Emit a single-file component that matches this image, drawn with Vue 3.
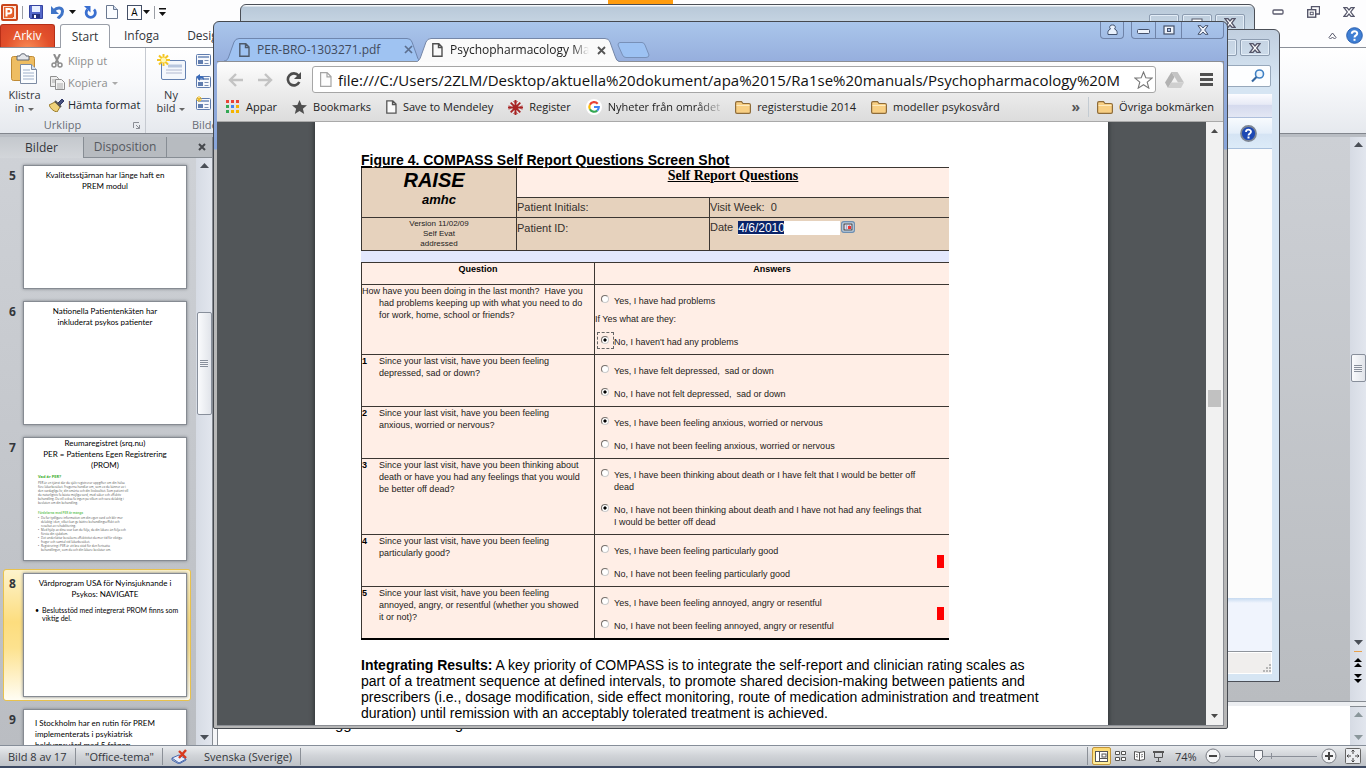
<script setup>
const slides = [
  { n: 5, lines: ['Kvalitetsstjärnan har länge haft en', 'PREM modul'] },
  { n: 6, lines: ['Nationella Patientenkäten har', 'inkluderat psykos patienter'] },
  { n: 7, lines: ['Reumaregistret (srq.nu)', 'PER = Patientens Egen Registrering', '(PROM)'], dense: true },
  { n: 8, lines: ['Vårdprogram USA för Nyinsjuknande i', 'Psykos: NAVIGATE'], bullet: ['Beslutsstöd med integrerat PROM finns som', 'viktig del.'], selected: true },
  { n: 9, lines: ['I Stockholm har en rutin för PREM', 'implementerats i psykiatrisk', 'heldygnsvård med 5 frågor:'], left: true },
]

const bookmarks = [
  { label: 'Appar', icon: 'apps' },
  { label: 'Bookmarks', icon: 'star' },
  { label: 'Save to Mendeley', icon: 'page' },
  { label: 'Register', icon: 'flake' },
  { label: 'Nyheter från området', icon: 'google', fade: true },
  { label: 'registerstudie 2014', icon: 'folder' },
  { label: 'modeller psykosvård', icon: 'folder' },
]

const appColors = ['#ea4335', '#ea4335', '#ea4335', '#34a853', '#4285f4', '#f4b400', '#34a853', '#f4b400', '#f4b400']

const questions = [
  { n: 1, q: ['Since your last visit, have you been feeling', 'depressed, sad or down?'], a: [['Yes, I have felt depressed,\u00a0 sad or down'], ['No, I have not felt depressed,\u00a0 sad or down']], pick: 1 },
  { n: 2, q: ['Since your last visit, have you been feeling', 'anxious, worried or nervous?'], a: [['Yes, I have been feeling anxious, worried or nervous'], ['No, I have not been feeling anxious, worried or nervous']], pick: 0 },
  { n: 3, q: ['Since your last visit, have you been thinking about', 'death or have you had any feelings that you would', 'be better off dead?'], a: [['Yes, I have been thinking about death or I have felt that I would be better off', 'dead'], ['No, I have not been thinking about death and I have not had any feelings that', 'I would be better off dead']], pick: 1 },
  { n: 4, q: ['Since your last visit, have you been feeling', 'particularly good?'], a: [['Yes, I have been feeling particularly good'], ['No, I have not been feeling particularly good']], pick: -1, flag: true },
  { n: 5, q: ['Since your last visit, have you been feeling', 'annoyed, angry, or resentful (whether you showed', 'it or not)?'], a: [['Yes, I have been feeling annoyed, angry or resentful'], ['No, I have not been feeling annoyed, angry or resentful']], pick: -1, flag: true },
]
</script>

<template>
  <div class="desktop">
    <section class="ppt" aria-label="PowerPoint">
      <header class="qat">
        <div class="qat-left">
          <svg width="17" height="17" viewBox="0 0 17 17"><rect x="1" y="1" width="15" height="15" rx="1" fill="#fbe3d8" stroke="#c9451b" stroke-width="2" /><rect x="3" y="3" width="9" height="11" fill="#e8622c" /><path d="M5.500 12.500V5h2.500a2 2 0 0 1 0 4.500H6" fill="none" stroke="#fff" stroke-width="2" /><path d="M12.500 4v9" stroke="#d9531f" /></svg>
          <i class="vsep"></i>
          <svg class="i-save" width="14" height="14" viewBox="0 0 14 14"><path d="M.5.5h13v13h-12l-1-1z" fill="#5468c9" stroke="#3443a0" /><rect x="3" y="1" width="8" height="6" fill="#e8efff" /><rect x="3" y="9" width="8" height="4" fill="#23307c" /><rect x="5" y="10" width="2" height="3" fill="#fff" /></svg>
          <svg class="i-undo" width="14" height="14" viewBox="0 0 14 14"><path d="M3 5.500C6 2 11.500 2 11.500 6.500S8.500 11 7 13.500" fill="none" stroke="#3f74c8" stroke-width="3" /><path d="M0 1v8h8z" fill="#3f74c8" /></svg>
          <svg class="i-dd" width="7" height="4"><path d="M0 0h7L3.500 4z" fill="#111" /></svg>
          <svg class="i-redo" width="13" height="13" viewBox="0 0 13 13"><path d="M3.500 3.500A4.600 4.600 0 1 0 10 3.500" fill="none" stroke="#3a6fd0" stroke-width="2.800" /><path d="M0 0h6.500v6.500L4 4z" fill="#3a6fd0" /></svg>
          <svg class="i-new" width="12" height="14" viewBox="0 0 12 14"><path d="M.5.500h7l4 4v9H.5z" fill="#fafcff" stroke="#6a7890" /><path d="M7.500.5v4h4" fill="#cfdcf0" stroke="#6a7890" /></svg>
          <span class="abox">A</span>
          <svg width="7" height="4"><path d="M0 0h7L3.500 4z" fill="#111" /></svg>
          <i class="vsep"></i>
          <svg width="7" height="8"><path d="M0 0h7v1.500H0zM0 4h7L3.500 8z" fill="#111" /></svg>
        </div>
        <div class="qat-right">
          <svg width="12" height="6"><rect x="1" y="1" width="10" height="4" rx="1" fill="#fff" stroke="#5b5b6e" stroke-width="1.300" /></svg>
          <svg width="13" height="12" viewBox="0 0 13 12"><path d="M4.500 3V.7h8V8H9" fill="none" stroke="#55566a" stroke-width="1.300" /><rect x=".7" y="3.700" width="8" height="7.500" fill="#fff" stroke="#55566a" stroke-width="1.400" /><rect x="3.200" y="6.200" width="3" height="2.500" fill="#fff" stroke="#55566a" /></svg>
          <svg width="12" height="10" viewBox="0 0 12 10"><path d="M1 .7h3L6 3 8 .7h3L7.700 5 11 9.300H8L6 7 4 9.300H1L4.300 5z" fill="#fff" stroke="#55566a" stroke-width="1.200" /></svg>
        </div>
      </header>

      <nav class="rtabs">
        <button class="rtab file">Arkiv</button>
        <button class="rtab active">Start</button>
        <button class="rtab">Infoga</button>
        <button class="rtab">Design</button>
        <div class="rhelp">
          <svg width="9" height="8" viewBox="0 0 9 8"><path d="M1 5.500l3.500-4.500L8 5.500 6.500 7l-2-2-2 2z" fill="#fff" stroke="#55566a" /></svg>
          <svg width="17" height="17" viewBox="0 0 17 17"><circle cx="8.500" cy="8.500" r="7.800" fill="#3f7fd4" stroke="#2a5faf" /><path d="M5.800 6.800C5.800 3.500 11.200 3.500 11.200 6.500 11.200 8.500 8.500 8.300 8.500 10.500" fill="none" stroke="#fff" stroke-width="2" /><rect x="7.500" y="11.800" width="2" height="2" fill="#fff" /></svg>
        </div>
      </nav>

      <div class="ribbon">
        <div class="group clip">
          <div class="group-body">
            <button class="big">
              <svg width="27" height="31" viewBox="0 0 27 31"><rect x=".5" y="3.500" width="23" height="24" rx="2" fill="#eebd62" stroke="#c08b35" /><path d="M6 3h3c0-3 6-3 6 0h3v4H6z" fill="#e4e6ea" stroke="#5f6672" /><path d="M9.500 11.500h11l5 5v14h-16z" fill="#fbfdff" stroke="#7c8ba3" /><path d="M20.500 11.500v5h5" fill="#d5e0f0" stroke="#7c8ba3" /><path d="M12 17h7M12 20h11M12 23h11M12 26h11" stroke="#9fb0ca" /></svg>
              <span>Klistra</span><span>in <b class="dd"></b></span>
            </button>
            <div class="small-btns">
              <button class="sm off"><svg width="16" height="14" viewBox="0 0 16 14"><path d="M5 0l4.500 9M11 0L6.500 9" stroke="#8d8d8d" stroke-width="2" /><circle cx="5" cy="11" r="2" fill="none" stroke="#8d8d8d" stroke-width="1.500" /><circle cx="11" cy="11" r="2" fill="none" stroke="#8d8d8d" stroke-width="1.500" /></svg>Klipp ut</button>
              <button class="sm off"><svg width="16" height="14" viewBox="0 0 16 14"><path d="M1.500.5h6l2 2v8h-8z" fill="#eee" stroke="#8f8f8f" /><path d="M6.500 3.500h6l3 3v7h-9z" fill="#f4f4f4" stroke="#8f8f8f" /><path d="M3 4h3M3 6h3M8 8h6M8 10h6M8 12h6" stroke="#aaa" /></svg>Kopiera <b class="dd"></b></button>
              <button class="sm"><svg width="16" height="14" viewBox="0 0 16 14"><path d="M9 5l4-4 2 2-4 4z" fill="#46507e" stroke="#2f3766" /><path d="M0 7l6-3 5 5-3 5C4 13 2 11 0 7z" fill="#efd27a" stroke="#9c7d2c" /><path d="M6 3l6 6" stroke="#555" stroke-width="2" /></svg>Hämta format</button>
            </div>
          </div>
          <div class="group-name"><span>Urklipp</span><svg class="launcher" width="7" height="7"><path d="M.5 6V.5H6M3 3l3.500 3.500M6.500 3v3.500H3" fill="none" stroke="#8a8d94" /></svg></div>
        </div>
        <div class="group pics">
          <div class="group-body">
            <button class="big">
              <svg width="29" height="31" viewBox="0 0 29 31"><rect x="4.500" y="7.500" width="24" height="19" rx="1.500" fill="#f4f7fc" stroke="#6380b0" /><path d="M11 13h14" stroke="#b8c6de" stroke-width="3" /><path d="M9 17h16M9 20h16" stroke="#c7cede" stroke-width="1.500" /><path d="M6.500 1v12M0 7h13M2 2.500l9 9M11 2.500l-9 9" stroke="#f4c623" stroke-width="2" /><circle cx="6.500" cy="7" r="2.500" fill="#fff7b5" /></svg>
              <span>Ny</span><span>bild <b class="dd"></b></span>
            </button>
            <div class="layout-icons">
              <svg v-for="k in 3" :key="k" width="15" height="15" viewBox="0 0 15 15"><rect x=".5" y="2.500" width="14" height="11" rx="1" fill="#f6f8fc" stroke="#5f7cae" /><path d="M2 5h11" stroke="#8ea4c8" stroke-width="2" /><rect x="2" y="8" width="5" height="4" fill="#5f7cae" /><path d="M8.500 8.500h4M8.500 11.500h4" stroke="#7b8fb3" /><path v-if="k === 2" d="M0 3l4-3v2c4 0 4 2 4 4-2-2-3-2-4-1v2z" fill="#3a6ab8" /><path v-if="k === 3" d="M3 0v6M0 3h6M1 1l4 4M5 1L1 5" stroke="#f1bd25" /></svg>
            </div>
          </div>
          <div class="group-name"><span>Bilder</span></div>
        </div>
      </div>

      <div class="work">
        <aside class="pane">
          <div class="pane-tabs">
            <button class="ptab on">Bilder</button>
            <button class="ptab">Disposition</button>
            <button class="pclose" aria-label="Stäng"><svg width="8" height="8"><path d="M1 1l6 6M7 1L1 7" stroke="#45484c" stroke-width="2" /></svg></button>
          </div>
          <div class="pane-main">
            <div class="slides">
              <div v-for="s in slides" :key="s.n" class="slide-row" :class="{ selected: s.selected }">
                <b class="num">{{ s.n }}</b>
                <div class="thumb" :class="{ left: s.left, dense: s.dense }">
                  <div v-for="l in s.lines" :key="l">{{ l }}</div>
                  <div v-if="s.bullet" class="tb">
                    <i>•</i><div><div v-for="l in s.bullet" :key="l">{{ l }}</div></div>
                  </div>
                  <div v-if="s.dense" class="tiny">
                    <h6>Vad är PER?</h6>
                    <p>PER är en tjänst där du själv registrerar uppgifter om din hälsa<br />före läkarbesöket. Frågorna handlar om, som ex du känner av i<br />den vardagliga liv, din smärta och din livskvalitet. Som patient vill<br />du naturligtvis få bästa möjliga vård, med säker och effektiv<br />behandling. Du vill också få ingen på vilken och vara delaktig i<br />besluten om din behandling.</p>
                    <h6 class="light">Fördelarna med PER är många</h6>
                    <ul>
                      <li>Du får tydligare information om din egen vård och blir mer<br />delaktig i den, vilket kan ge bättre behandlingseffekt och<br />resultat av rehabilitering.</li>
                      <li>Med hjälp av dina svar kan du följa, då din läkare än följa och<br />förstå din sjukdom.</li>
                      <li>Det underlättar besökens effektivitet då mer tid för viktiga<br />frågor och samtal vid läkarbesöket.</li>
                      <li>Registrering i PER är ett bra stöd för den fortsatta<br />behandlingen, som du och din läkare beslutar om.</li>
                    </ul>
                  </div>
                </div>
              </div>
            </div>
            <div class="oscroll">
              <svg class="up" width="9" height="5"><path d="M0 5h9L4.500 0z" fill="#4a4f57" /></svg>
              <div class="othumb t1"><i></i></div>
              <svg class="down" width="9" height="5"><path d="M0 0h9L4.500 5z" fill="#4a4f57" /></svg>
            </div>
          </div>
        </aside>
        <div class="stage">
          <div class="canvas">
            <div class="oscroll">
              <svg class="up" width="9" height="5"><path d="M0 5h9L4.500 0z" fill="#4a4f57" /></svg>
              <div class="othumb t2"><i></i></div>
              <svg class="down" width="9" height="5"><path d="M0 0h9L4.500 5z" fill="#4a4f57" /></svg>
              <div class="pagers">
                <svg width="8" height="9"><path d="M0 4h8L4 0zM0 9h8L4 5z" fill="#000" /></svg>
                <svg width="8" height="9"><path d="M0 0h8L4 4zM0 5h8L4 9z" fill="#000" /></svg>
              </div>
            </div>
          </div>
          <div class="notes">
            <div class="notes-text"><span>gg</span><span>g</span></div>
            <div class="oscroll short">
              <svg class="up" width="9" height="5"><path d="M0 5h9L4.500 0z" fill="#8b979b" /></svg>
              <svg class="down" width="9" height="5"><path d="M0 0h9L4.500 5z" fill="#8b979b" /></svg>
            </div>
          </div>
        </div>
      </div>

      <footer class="status">
        <span class="s1">Bild 8 av 17</span><span class="s2">"Office-tema"</span>
        <span class="s3"><svg width="17" height="15" viewBox="0 0 17 15"><path d="M1 9l7-3 7 4-7 4z" fill="#e8eefb" stroke="#4a6aae" /><path d="M1 9v2l7 4 7-4v-1" fill="none" stroke="#4a6aae" /><path d="M8 2l7 7M15 1L8 9" stroke="#d8391e" stroke-width="2.400" /></svg>Svenska (Sverige)</span>
        <div class="views">
          <button class="view on" aria-label="Normal"><svg width="13" height="11"><rect x=".5" y=".5" width="12" height="10" fill="#fff" stroke="#555" /><path d="M4.500 1v9M5 7.500h7" stroke="#555" /><rect x="7" y="3" width="4" height="3" fill="none" stroke="#555" /></svg></button>
          <button class="view" aria-label="Sortering"><svg width="11" height="11"><path d="M.5.500h4v3h-4zM6.500.5h4v3h-4zM.5 6.500h4v3h-4zM6.500 6.500h4v3h-4z" fill="#fff" stroke="#555" /></svg></button>
          <button class="view" aria-label="Läsvy"><svg width="11" height="12"><path d="M.5 1.500l5 1 5-1v8l-5 1-5-1zM5.500 2v9" fill="#fff" stroke="#555" /><path d="M2 4.500l2 .5M2 6.500l2 .5M7 5l2-.5M7 7l2-.5" stroke="#777" /></svg></button>
          <button class="view" aria-label="Bildspel"><svg width="11" height="11"><path d="M0 1h11" stroke="#555" stroke-width="2" /><path d="M1.500 2v4.500h8V2M5.500 7v3M3 10.500h5" fill="none" stroke="#555" /></svg></button>
        </div>
        <span class="pct">74%</span>
        <svg width="16" height="16"><circle cx="8" cy="8" r="7" fill="#f4f5f7" stroke="#777b82" /><path d="M4 8h8" stroke="#444" stroke-width="2" /></svg>
        <div class="ztrack"><svg width="9" height="12"><path d="M.5.500h8v7l-4 4-4-4z" fill="#f7f7f9" stroke="#6d727a" /></svg></div>
        <svg width="16" height="16"><circle cx="8" cy="8" r="7" fill="#f4f5f7" stroke="#777b82" /><path d="M4 8h8M8 4v8" stroke="#444" stroke-width="2" /></svg>
        <svg class="fit" width="16" height="16"><rect x=".5" y=".5" width="15" height="15" rx="1" fill="#eceef1" stroke="#666" /><path d="M8 2v4M8 10v4M2 8h4M10 8h4M6.500 3.500L8 2l1.500 1.500M6.500 12.500L8 14l1.500-1.500M3.500 6.500L2 8l1.500 1.500M12.500 6.500L14 8l-1.500 1.500" fill="none" stroke="#444" /></svg>
      </footer>
    </section>

    <div class="orange"></div>

    <section class="win back" aria-label="Utforskaren">
      <div class="wbtns"><button aria-label="Minimera"></button><button aria-label="Maximera"><svg width="12" height="10"><rect x="1" y="1" width="10" height="8" fill="#fff" stroke="#555a6a" /></svg></button><button aria-label="Stäng"><svg width="12" height="10" viewBox="0 0 12 10"><path d="M1 .7h3L6 3 8 .7h3L7.700 5 11 9.300H8L6 7 4 9.300H1L4.300 5z" fill="#fff" stroke="#55566a" stroke-width="1.300" /></svg></button></div>
    </section>

    <section class="win explorer" aria-label="Bibliotek">
      <div class="wbtns"><button aria-label="Maximera"></button><button aria-label="Stäng"><svg width="12" height="10" viewBox="0 0 12 10"><path d="M1 .7h3L6 3 8 .7h3L7.700 5 11 9.300H8L6 7 4 9.300H1L4.300 5z" fill="#fff" stroke="#55566a" stroke-width="1.300" /></svg></button></div>
      <div class="esearch"><svg width="14" height="14" viewBox="0 0 14 14"><circle cx="8.500" cy="5" r="4" fill="#eef6fd" stroke="#3f80c4" stroke-width="1.600" /><path d="M5.500 8L1 12.500" stroke="#35669f" stroke-width="2.200" /></svg></div>
      <div class="emenu"></div>
      <div class="ebar"><svg width="17" height="17" viewBox="0 0 17 17"><circle cx="8.500" cy="8.500" r="7.500" fill="#1d48b4" stroke="#7d8694" stroke-width="1.800" /><path d="M6 7C6 4 11 4 11 6.800 11 8.500 8.500 8.500 8.500 10.500" fill="none" stroke="#fff" stroke-width="1.800" /><rect x="7.500" y="11.500" width="2" height="2" fill="#fff" /></svg></div>
      <div class="ebody"></div>
      <div class="edetails"></div>
      <div class="estatus"><svg width="9" height="9"><path d="M7 0h2v2H7zM4 3h2v2H4zM7 3h2v2H7zM1 6h2v2H1zM4 6h2v2H4zM7 6h2v2H7z" fill="#b6b6b6" /></svg></div>
    </section>

    <main class="chrome">
      <div class="tabstrip">
        <button class="ctab">
          <svg class="shape" width="198" height="23" viewBox="0 0 198 23"><path d="M0 23C3 23 4 21 5 18L10 4Q11.500.5 15 .5H183Q187 .5 188 4L193 18Q194 23 198 23" fill="#9fc3f2" stroke="#6f86ae" /></svg>
          <svg class="pg" width="11" height="14"><path d="M.8.800h6L10 4v9.200H.8zM6.500 1v3.500H10" fill="none" stroke="#4e5a6b" stroke-width="1.400" /></svg>
          <span class="ct-label">PER-BRO-1303271.pdf</span>
          <svg class="x" width="9" height="9"><path d="M1 1l7 7M8 1L1 8" stroke="#5c6f8f" stroke-width="1.700" /></svg>
        </button>
        <button class="ctab act">
          <svg class="shape" width="204" height="24" viewBox="0 0 204 24"><path d="M0 24C3 23 4 21 5 18L10 4Q11.500.5 15 .5H189Q193 .5 194 4L199 18Q200 23 204 24" fill="#fafafa" stroke="#7587a8" /></svg>
          <svg class="pg" width="11" height="14"><path d="M.8.800h6L10 4v9.200H.8zM6.500 1v3.500H10" fill="none" stroke="#505050" stroke-width="1.400" /></svg>
          <span class="ct-label fade">Psychopharmacology Man</span>
          <svg class="x" width="9" height="9"><path d="M1 1l7 7M8 1L1 8" stroke="#555" stroke-width="1.800" /></svg>
        </button>
        <button class="newtab" aria-label="Ny flik"><svg width="33" height="16"><path d="M3 .5H25Q27 .5 28 3L32 13Q32 15.500 29 15.500H9Q6.500 15.500 5.500 13L1 3Q1 .5 3 .5z" fill="#9dc2f3" stroke="#7890b8" /></svg></button>
        <div class="cctl">
          <button class="user" aria-label="Användare"><svg width="11" height="12"><path d="M5.500 1a2.300 2.300 0 0 1 2 4c2.500 1 3 3 2.500 5.500H1C.5 8 1 6 3.500 5A2.300 2.300 0 0 1 5.500 1z" fill="#e9f1fc" stroke="#43536f" /></svg></button>
          <div class="trio">
            <button class="c1" aria-label="Minimera"><svg width="13" height="5"><rect x=".5" y=".5" width="12" height="4" rx="1" fill="#eef3fb" stroke="#44506a" /></svg></button>
            <button class="c2" aria-label="Maximera"><svg width="12" height="10"><rect x="1" y="1" width="10" height="8" fill="#eef3fb" stroke="#44506a" stroke-width="1.200" /><rect x="4.500" y="3.500" width="3" height="3" fill="#a9c1ea" stroke="#44506a" /></svg></button>
            <button class="c3" aria-label="Stäng"><svg width="12" height="10" viewBox="0 0 12 10"><path d="M1 .7h3L6 3 8 .7h3L7.700 5 11 9.300H8L6 7 4 9.300H1L4.300 5z" fill="#eef3fb" stroke="#44506a" /></svg></button>
          </div>
        </div>
      </div>
      <div class="cbody">
        <div class="bars">
          <div class="toolbar">
            <button class="nav" aria-label="Bakåt"><svg width="16" height="14"><path d="M15 7H2M8 1L2 7l6 6" fill="none" stroke="#c3c3c3" stroke-width="2.400" /></svg></button>
            <button class="nav" aria-label="Framåt"><svg width="16" height="14"><path d="M1 7h13M8 1l6 6-6 6" fill="none" stroke="#c3c3c3" stroke-width="2.400" /></svg></button>
            <button class="nav" aria-label="Ladda om"><svg width="16" height="15"><path d="M12.500 3.500A6 6 0 1 0 13.300 10" fill="none" stroke="#4d4d4d" stroke-width="2.600" /><path d="M15 0v7H8z" fill="#4d4d4d" /></svg></button>
            <div class="omni">
              <svg width="12" height="15"><path d="M.6.600h6.500L11 4.500v9.900H.6zM7 .8v4h4" fill="#fdfdfd" stroke="#a5a5a5" stroke-width="1.200" /></svg>
              <input aria-label="Adress" type="text" value="file:///C:/Users/2ZLM/Desktop/aktuella%20dokument/apa%2015/Ra1se%20manuals/Psychopharmacology%20M" />
              <svg width="19" height="18" viewBox="0 0 19 18"><path d="M9.500 1l2.300 5.700 6.200.4-4.800 4 1.600 6-5.300-3.400-5.300 3.400 1.600-6L1 7.100l6.200-.4z" fill="#fff" stroke="#777" stroke-width="1.100" /></svg>
            </div>
            <svg class="drive" width="19" height="16"><path d="M6.500 0h6L19 10.500h-6z" fill="#c4c4c4" /><path d="M6.500 0L0 10.500 3 16 9.500 5z" fill="#b2b2b2" /><path d="M6 10.500h13L16 16H3z" fill="#cfcfcf" /></svg>
            <button class="menu" aria-label="Meny"><svg width="13" height="13"><path d="M0 1.500h13M0 6.500h13M0 11.500h13" stroke="#515151" stroke-width="3" /></svg></button>
          </div>
          <div class="bookmarks">
            <a v-for="b in bookmarks" :key="b.label" href="#" :class="{ fadebm: b.fade }">
              <svg v-if="b.icon === 'apps'" width="14" height="14"><rect v-for="(c, k) in appColors" :key="k" :x="(k % 3) * 5" :y="Math.floor(k / 3) * 5" width="3" height="3" :fill="c" /></svg>
              <svg v-else-if="b.icon === 'star'" width="15" height="14" viewBox="0 0 15 14"><path d="M7.500 0l2.100 4.900 5.400.4-4.100 3.500 1.300 5.200-4.700-2.900L2.800 14l1.300-5.200L0 5.300l5.400-.4z" fill="#4f4f4f" /></svg>
              <svg v-else-if="b.icon === 'page'" width="11" height="14"><path d="M.8.800h6L10 4v9.200H.8zM6.500 1v3.500H10" fill="#fafafa" stroke="#555" stroke-width="1.300" /></svg>
              <svg v-else-if="b.icon === 'flake'" width="15" height="15" viewBox="0 0 15 15"><path d="M7.500 0v15M0 7.500h15M2.700 2.700l9.600 9.600M12.300 2.700L2.700 12.300" stroke="#a82424" stroke-width="1.900" /><path d="M5.500 1l2 2 2-2M5.500 14l2-2 2 2M1 5.500l2 2-2 2M14 5.500l-2 2 2 2" fill="none" stroke="#a82424" /></svg>
              <svg v-else-if="b.icon === 'google'" width="16" height="16" viewBox="0 0 16 16"><circle cx="8" cy="8" r="8" fill="#fff" /><g fill="none" stroke-width="2.200"><path d="M11.700 4.700A4.800 4.800 0 0 0 3.900 5.700" stroke="#ea4335" /><path d="M3.900 5.700A4.800 4.800 0 0 0 3.900 10.300" stroke="#fbbc05" /><path d="M3.900 10.300A4.800 4.800 0 0 0 11.200 11.600" stroke="#34a853" /><path d="M11.200 11.600A4.800 4.800 0 0 0 12.800 8H8" stroke="#4285f4" /></g></svg>
              <svg v-else width="16" height="13" viewBox="0 0 16 13"><path d="M.6 11V2Q.6.600 2 .6H6.500L8 2.500H14Q15.400 2.500 15.400 4V11Q15.400 12.400 14 12.400H2Q.6 12.400.6 11z" fill="#f8cf83" stroke="#8e6c3a" stroke-width="1.200" /><path d="M1.500 4.500H14.500" stroke="#fdebc0" /></svg>
              <span>{{ b.label }}</span>
            </a>
            <span class="more">»</span>
            <i class="bsep"></i>
            <a href="#"><svg width="16" height="13" viewBox="0 0 16 13"><path d="M.6 11V2Q.6.600 2 .6H6.500L8 2.500H14Q15.400 2.500 15.400 4V11Q15.400 12.400 14 12.400H2Q.6 12.400.6 11z" fill="#f8cf83" stroke="#8e6c3a" stroke-width="1.200" /><path d="M1.500 4.500H14.500" stroke="#fdebc0" /></svg><span>Övriga bokmärken</span></a>
          </div>
        </div>

        <div class="viewer">
          <article class="page">
            <h1>Figure 4. COMPASS Self Report Questions Screen Shot</h1>
            <div class="figure">
              <table class="head">
                <colgroup><col class="k1" /><col class="k2" /><col /></colgroup>
                <tbody>
                  <tr><td class="brand" rowspan="2"><em class="raise">RAISE</em><em class="amhc">amhc</em></td><td class="srq" colspan="2">Self Report Questions</td></tr>
                  <tr class="h2r"><td>Patient Initials:</td><td>Visit Week:&nbsp; 0</td></tr>
                  <tr class="h3r"><td class="ver">Version 11/02/09<br />Self Evat<br />addressed</td><td>Patient ID:</td><td><div class="daterow"><label for="date">Date</label><input id="date" type="text" value="4/6/2010" /><svg width="14" height="12"><rect x=".7" y=".7" width="12.600" height="10.600" rx="2" fill="#dbe6f2" stroke="#6f8fb0" stroke-width="1.400" /><rect x="3" y="3" width="8" height="6" fill="#fff" stroke="#333" /><path d="M3 5h8M3 7h8M5.500 3v6M8.500 3v6" stroke="#8a8ab4" stroke-width=".6" /><rect x="7" y="5" width="3" height="3" fill="#e33" /></svg></div></td></tr>
                </tbody>
              </table>
              <div class="band"></div>
              <table class="qs">
                <thead><tr><th class="qcol">Question</th><th>Answers</th></tr></thead>
                <tbody>
                  <tr class="first">
                    <td class="q hang">How have you been doing in the last month?&nbsp; Have you<br />had problems keeping up with what you need to do<br />for work, home, school or friends?</td>
                    <td class="a">
                      <label><input type="radio" name="q0" /><span>Yes, I have had problems</span></label>
                      <p>If Yes what are they:</p>
                      <label class="foc"><input type="radio" name="q0" checked /><span>No, I haven't had any problems</span></label>
                    </td>
                  </tr>
                  <tr v-for="r in questions" :key="r.n">
                    <td class="q"><div class="qrow"><b>{{ r.n }}</b><span><template v-for="(l, k) in r.q" :key="k"><br v-if="k" />{{ l }}</template></span></div></td>
                    <td class="a">
                      <label v-for="(o, k) in r.a" :key="k"><input type="radio" :name="'q' + r.n" :checked="r.pick === k" /><span><template v-for="(l, j) in o" :key="j"><br v-if="j" />{{ l }}</template></span></label>
                      <i v-if="r.flag" class="flag"></i>
                    </td>
                  </tr>
                </tbody>
              </table>
            </div>
            <p class="body"><b>Integrating Results:</b> A key priority of COMPASS is to integrate the self-report and clinician rating scales as<br />part of a treatment sequence at defined intervals, to promote shared decision-making between patients and<br />prescribers (i.e., dosage modification, side effect monitoring, route of medication administration and treatment<br />duration) until remission with an acceptably tolerated treatment is achieved.</p>
          </article>
          <div class="cscroll">
            <svg width="7" height="4"><path d="M0 4h7L3.500 0z" fill="#4a4a4a" /></svg>
            <i></i>
            <svg class="cdown" width="7" height="4"><path d="M0 0h7L3.500 4z" fill="#4a4a4a" /></svg>
          </div>
        </div>
      </div>
    </main>
  </div>
</template>

<style>
body { margin: 0; background: #fff; }
</style>

<style scoped>
* { box-sizing: border-box; }
svg { display: block; flex: none; }
button { border: 0; padding: 0; margin: 0; background: none; font: inherit; color: inherit; display: flex; align-items: center; justify-content: center; }
i { font-style: normal; }
.desktop { position: relative; height: 100vh; overflow: hidden; font: 11px/14px "Open Sans", "Noto Sans", sans-serif; color: #33363b; }
.ppt { height: 100%; display: flex; flex-direction: column; background: #fdfdfe; border-bottom: 2px solid #3d4a63; }

.qat { height: 24px; display: flex; justify-content: space-between; padding: 0 11px 0 1px; }
.qat-left { display: flex; align-items: center; }
.vsep { width: 1px; height: 13px; background: #9b9ea5; margin: 0 4px; }
.i-save { margin-left: 2px; }
.i-undo { margin: 0 4px 0 8px; }
.i-redo { margin: 0 9px 0 8px; }
.abox { width: 15px; height: 15px; margin: 0 1px 0 9px; border: 1px solid #444f66; font-size: 10px; line-height: 13px; text-align: center; color: #000; }
.qat-right { display: flex; align-items: center; gap: 23px; }

.rtabs { height: 24px; display: flex; align-items: stretch; border-bottom: 1px solid #8b9099; font-size: 12px; }
.rtab { padding: 0 14px; }
.rtab.file { width: 55px; padding: 0; margin-right: 5px; color: #fff; background: radial-gradient(ellipse at 50% 110%, #f98b55, #e2502b 60%, #d8432a); border: 1px solid #b52f17; border-bottom: 0; border-radius: 3px 3px 0 0; }
.rtab.active { width: 50px; padding: 0; background: #fff; border: 1px solid #9a9fa8; border-bottom: 0; border-radius: 3px 3px 0 0; margin-bottom: -1px; }
.rhelp { margin-left: auto; display: flex; align-items: center; gap: 9px; padding-right: 3px; }

.ribbon { height: 86px; flex: none; display: flex; background: linear-gradient(#fff, #f8f9fb 40%, #e6e9ee); border-bottom: 1px solid #82868d; }
.group { display: flex; flex-direction: column; border-right: 1px solid #c6cad1; }
.group.clip { width: 146px; }
.group-body { flex: 1; display: flex; }
.group-name { height: 16px; display: flex; align-items: center; justify-content: center; position: relative; color: #686d76; }
.launcher { position: absolute; right: 5px; top: 5px; }
.clip .group-name { padding-right: 20px; }
.big { flex-direction: column; justify-content: flex-start; padding-top: 5px; line-height: 13px; }
.big svg { margin-bottom: 4px; }
.clip .big { width: 49px; }
.pics .big { width: 50px; }
.dd { display: inline-block; border: 3px solid transparent; border-top: 3px solid #666; border-bottom: 0; vertical-align: middle; margin-left: 1px; }
.small-btns { display: flex; flex-direction: column; gap: 8px; padding-top: 6px; }
.sm { gap: 3px; height: 14px; justify-content: flex-start; white-space: nowrap; color: #22262c; }
.sm.off { color: #8d8d8d; }
.sm.off .dd { border-top-color: #aaa; }
.layout-icons { display: flex; flex-direction: column; gap: 7px; padding-top: 4px; }
.pics .group-name { justify-content: flex-start; padding-left: 46px; }

.work { flex: 1; min-height: 0; display: flex; padding-top: 3px; background: #b9bdc3; }
.pane { width: 213px; flex: none; display: flex; flex-direction: column; border-right: 1px solid #868b92; background: linear-gradient(#cfd2d7, #babdc2); }
.pane-tabs { height: 21px; flex: none; display: flex; font-size: 12px; }
.ptab { width: 83px; background: #b7bbc0; color: #55595f; border-bottom: 1px solid #878d94; border-left: 1px solid #878d94; }
.ptab.on { background: linear-gradient(#c4c8cd, #d3d6da); color: #33363b; border: 0; }
.pclose { flex: 1; background: #b7bbc0; border-left: 1px solid #878d94; border-bottom: 1px solid #878d94; padding-left: 25px; }
.pane-main { flex: 1; min-height: 0; display: flex; }
.slides { flex: 1; overflow: hidden; display: flex; flex-direction: column; gap: 4px; padding: 3px 5px 0 3px; }
.slide-row { height: 132px; flex: none; display: flex; padding: 3px 3px 3px 5px; border: 1px solid transparent; }
.slide-row.selected { border-color: #e9c24d; border-radius: 3px; background: linear-gradient(#fdf3cc, #fddd7e 40%, #fde28f 60%, #fffdf4); }
.num { width: 14px; padding-top: 4px; font-size: 12px; }
.thumb { flex: 1; min-width: 0; padding-top: 4px; background: #fff; border: 1px solid #868b92; box-shadow: 0 0 3px #7d8187; text-align: center; color: #000; font: 8px/11px Lato, "Open Sans", sans-serif; overflow: hidden; white-space: nowrap; }
.thumb.dense { padding-top: 0; }
.thumb.left { text-align: left; padding: 8px 0 0 11px; }
.tb { display: flex; gap: 3px; padding: 6px 0 0 11px; text-align: left; font: 7px/8px Lato, sans-serif; }
.tiny { padding: 3px 0 0 14px; text-align: left; font: 3px/4px "Open Sans", sans-serif; color: #555; }
.tiny h6 { margin: 0 0 2px; font-size: 4px; line-height: 5px; color: #3cae2c; }
.tiny h6.light { margin: 6px 0 0; font-size: 3px; color: #74c96a; }
.tiny p { margin: 0; }
.tiny ul { margin: 0; padding-left: 3px; list-style: none; }
.tiny li { position: relative; }
.tiny li::before { content: "•"; position: absolute; left: -3px; }

.oscroll { width: 16px; flex: none; display: flex; flex-direction: column; align-items: center; background: linear-gradient(90deg, #d6dbe4, #e2e6ee); padding: 5px 0; }
.oscroll .down { margin-top: auto; }
.othumb { width: 15px; border: 1px solid #888f9b; border-radius: 2px; background: linear-gradient(90deg, #fafbfd, #e1e4ea); display: flex; align-items: center; justify-content: center; }
.othumb i { width: 8px; height: 7px; background: repeating-linear-gradient(#888f9b 0 1px, #f3f4f7 1px 2px); }
.othumb.t1 { height: 103px; margin-top: 144px; }
.othumb.t2 { height: 28px; margin-top: 207px; }
.pagers { display: flex; flex-direction: column; gap: 7px; height: 50px; margin-top: 6px; padding-top: 6px; border-top: 1px solid #e9a14b; }
.stage { flex: 1; min-width: 0; display: flex; flex-direction: column; border-left: 4px solid #f4f5f7; }
.canvas { flex: 1; display: flex; justify-content: flex-end; background: linear-gradient(#cdd0d5, #b9bcc0); border-bottom: 1px solid #868b92; }
.canvas .oscroll { padding-bottom: 0; }
.notes { height: 43px; flex: none; display: flex; justify-content: space-between; background: #fff; border-top: 4px solid #eceef1; border-left: 1px solid #868b92; }
.notes-text { display: flex; gap: 103px; padding: 10px 0 0 117px; font: 15px/16px "Liberation Sans", sans-serif; color: #000; }
.oscroll.short { border-top: 1px solid #868b92; }

.status { height: 21px; flex: none; display: flex; align-items: center; background: linear-gradient(#e9ebee, #d0d3d7 50%, #bfc3c8); border-top: 1px solid #868e99; white-space: nowrap; }
.status span { height: 17px; line-height: 17px; }
.s1 { width: 76px; padding-left: 8px; border-right: 1px solid #8b9097; }
.s2 { width: 87px; padding-left: 9px; border-right: 1px solid #8b9097; }
.s3 { width: 138px; display: flex; align-items: center; gap: 16px; padding-left: 8px; border-right: 1px solid #8b9097; }
.views { margin-left: auto; display: flex; align-items: center; padding-left: 4px; border-left: 1px solid #8b9097; }
.view { width: 18px; height: 18px; }
.view.on { width: 19px; background: linear-gradient(#fdd96f, #ffef9c); border: 1px solid #c1943a; border-radius: 2px; }
.view + .view { margin-right: 1px; }
.pct { width: 37px; padding-left: 7px; }
.ztrack { width: 92px; height: 12px; margin: 0 4px; padding-left: 29px; background: linear-gradient(#8a8f98, #8a8f98) center / 100% 1px no-repeat, linear-gradient(#8a8f98, #8a8f98) 46px 3px / 1px 6px no-repeat; }
.fit { margin: 0 5px 0 8px; }

.orange { position: absolute; top: 0; left: 608px; width: 65px; height: 4px; background: #ff9c0e; }
.win { position: absolute; border: 1px solid #4b4f57; border-radius: 6px 6px 0 0; }
.win.back { left: 240px; right: 111px; top: 4px; bottom: 140px; background: linear-gradient(#f6f9fc 0 1px, #b9c9d9 2px, #cbd9e6 25px, #cbdbe8); }
.wbtns { display: flex; justify-content: flex-end; gap: 3px; }
.wbtns button { width: 30px; height: 17px; border: 1px solid #8c9cb0; border-radius: 2px; box-shadow: inset 0 0 0 1px #e3edf7; }
.back .wbtns { padding: 9px 9px 0 0; }
.explorer { left: 700px; right: 86px; top: 29px; bottom: 86px; display: flex; flex-direction: column; padding: 9px 7px 7px; background: linear-gradient(#c1cfdf, #d6e5f3 50px); }
.explorer .wbtns { padding-right: 2px; }
.esearch { height: 22px; margin: 9px 1px 7px 0; display: flex; align-items: center; justify-content: flex-end; padding-right: 5px; background: #fdfeff; border: 1px solid #97a8bb; border-radius: 2px; }
.emenu { height: 24px; background: linear-gradient(#fcfcff, #e7eaf6 45%, #d5daee 50%, #e3e7f4); border-bottom: 1px solid #aebfdc; }
.ebar { height: 31px; display: flex; align-items: center; justify-content: flex-end; padding-right: 15px; background: linear-gradient(#f8fbfe, #e4eef9 50%, #d5e4f4 55%, #dcebf8); border-bottom: 1px solid #a9c0dc; }
.ebody { flex: 1; background: #fcfcfc; }
.edetails { height: 54px; background: linear-gradient(#c6daf0, #f0f4fd 5px); border-bottom: 1px solid #8f949c; }
.estatus { height: 22px; display: flex; align-items: flex-end; justify-content: flex-end; background: #f0eeed; border: 1px solid #fff; }

.chrome { position: absolute; left: 213px; right: 138px; top: 21px; bottom: 39px; display: flex; flex-direction: column; padding: 0 3px 2px; border: 1px solid #45494f; border-radius: 6px 6px 2px 2px; background: linear-gradient(#aac6eb, #96aedd 40px, #88a5da 127px, #bababa 128px, #b6b6b6); }
.tabstrip { height: 39px; flex: none; display: flex; align-items: flex-end; padding-left: 7px; position: relative; z-index: 1; color: #3f4a5c; }
.ctab { position: relative; width: 198px; height: 23px; justify-content: flex-start; padding: 0 9px 0 15px; font-size: 12px; white-space: nowrap; }
.ctab.act { width: 204px; height: 24px; margin: 0 0 -1px -6px; padding: 0 14px 0 16px; color: #222; }
.ctab .shape { position: absolute; left: 0; top: 0; }
.ctab .pg, .ct-label, .ctab .x { position: relative; }
.ct-label { flex: 1; min-width: 0; margin: 0 8px 0 7px; text-align: left; overflow: hidden; }
.fade { -webkit-mask-image: linear-gradient(90deg, #000 88%, transparent); mask-image: linear-gradient(90deg, #000 88%, transparent); }
.newtab { margin: 0 0 3px -3px; }
.cctl { margin-left: auto; align-self: flex-start; display: flex; gap: 7px; }
.cctl button { height: 17px; border: 1px solid #6f83a8; border-top: 0; }
.cctl .user { width: 24px; border-radius: 0 0 4px 4px; }
.trio { display: flex; }
.cctl .c1 { width: 25px; border-radius: 0 0 0 4px; padding-top: 3px; }
.cctl .c2 { width: 26px; border-left: 0; }
.cctl .c3 { width: 42px; border-left: 0; border-radius: 0 0 4px 0; }
.cbody { flex: 1; min-height: 0; display: flex; flex-direction: column; border: 1px solid #8b8e94; border-left: 0; }
.bars { flex: none; background: linear-gradient(#fdfdfd, #ececec 30px, #dcdcdc); border-bottom: 1px solid #a9a9a9; border-radius: 3px 3px 0 0; }
.toolbar { height: 35px; display: flex; align-items: center; padding: 0 10px 0 11px; }
.nav { width: 16px; margin-right: 13px; }
.nav:nth-child(3) { margin-right: 10px; }
.omni { flex: 1; height: 27px; display: flex; align-items: center; padding: 0 2px 0 7px; background: #fff; border: 1px solid #a6a6a6; border-radius: 3px; }
.omni input { flex: 1; min-width: 0; height: 24px; margin: 0 2px 0 6px; padding: 0; border: 0; outline: 0; background: none; font: 15px/24px "Open Sans", sans-serif; color: #111; }
.drive { margin: 0 16px 0 9px; }
.bookmarks { height: 24px; display: flex; align-items: center; gap: 15px; padding: 0 9px 4px; white-space: nowrap; }
.bookmarks a { display: flex; align-items: center; gap: 6px; text-decoration: none; color: #222; }
.fadebm span { -webkit-mask-image: linear-gradient(90deg, #000 80%, rgba(0, 0, 0, 0.2)); mask-image: linear-gradient(90deg, #000 80%, rgba(0, 0, 0, 0.2)); }
.more { margin-left: auto; font-size: 14px; font-weight: 700; color: #555; }
.bsep { width: 1px; height: 20px; margin: 0 -7px; background: #c3cbd2; }

.viewer { flex: 1; min-height: 0; display: flex; justify-content: center; overflow: hidden; background: #525659; }
.page { width: 793px; flex: 0 1 793px; margin: 0 auto; padding: 30px 46px 0; background: #fff; box-shadow: 0 0 4px 1px #303437; font-family: "Liberation Sans", Arial, sans-serif; color: #000; white-space: nowrap; }
.page h1 { height: 15px; margin: 0; font-size: 14px; line-height: 16px; text-decoration: underline; text-decoration-thickness: 2px; }
.figure { width: 588px; height: 473px; overflow: hidden; background: #ffeee6; }
table { width: 100%; border-collapse: collapse; table-layout: fixed; }
td, th { padding: 0; vertical-align: top; border: 1px solid #3b3632; border-right: 0; text-align: left; }
.head { font-size: 11px; line-height: 14px; color: #35302c; }
.head td { background: #e6d2bd; }
.k1 { width: 155px; }
.k2 { width: 193px; }
.raise, .amhc { display: block; font-weight: 700; }
.raise { font-size: 20px; line-height: 24px; padding-right: 10px; }
.amhc { font-size: 13px; line-height: 16px; }
.head td.brand { text-align: center; color: #000; }
.head td.srq { height: 30px; text-align: center; background: #ffeee6; font: 700 14px/16px "Liberation Serif", serif; text-decoration: underline; color: #000; }
.h2r td { height: 20px; padding-top: 2px; }
.h3r td { height: 33px; padding-top: 3px; }
.head td.ver { text-align: center; font-size: 8px; line-height: 10px; padding-top: 1px; color: #222; }
.daterow { display: flex; align-items: flex-start; }
.daterow label { margin-right: 5px; line-height: 12px; }
.daterow input { width: 102px; height: 14px; margin-right: 1px; padding: 0; border: 0; font: 12px/14px "Liberation Sans", sans-serif; color: #fff; background: linear-gradient(#0a246a, #0a246a) 0 0 / 46px 13px no-repeat #fff; }
.band { height: 11px; background: #e3e8fd; }
.qs { font: 9px/12px "Liberation Sans", Arial, sans-serif; color: #1d1a18; border-bottom: 2px solid #000; }
.qs th { height: 22px; text-align: center; color: #000; }
.qcol { width: 233px; }
.q.hang { padding-left: 17px; text-indent: -17px; }
.qrow { display: flex; }
.qrow b { width: 17px; flex: none; color: #000; }
.a { position: relative; height: 52px; padding: 10px 0 6px; }
.first .a { height: 69px; }
.a label { display: flex; align-items: flex-start; position: relative; }
.a label + label { margin-top: 11px; }
.a label input { appearance: none; flex: none; width: 8px; height: 8px; margin: 0 5px 0 6px; border: 1px solid #77706c; border-right-color: #ccc; border-bottom-color: #ccc; border-radius: 50%; background: #fff; }
.a label input:checked { background: radial-gradient(#000 0 30%, #fff 45%); }
.a p { margin: 6px 0 11px; }
.foc::before { content: ""; position: absolute; left: 2px; top: -4px; width: 15px; height: 15px; border: 1px dashed #666; }
.flag { position: absolute; right: 5px; top: 20px; width: 7px; height: 13px; background: #f00; }
.body { margin: 17px 0 0; font-size: 14px; line-height: 16px; }
.cscroll { width: 17px; flex: none; display: flex; flex-direction: column; align-items: center; padding: 7px 0; background: #f1f1f1; }
.cscroll i { width: 13px; height: 17px; margin-top: 257px; background: #c1c1c1; }
.cdown { margin-top: auto; }
</style>
